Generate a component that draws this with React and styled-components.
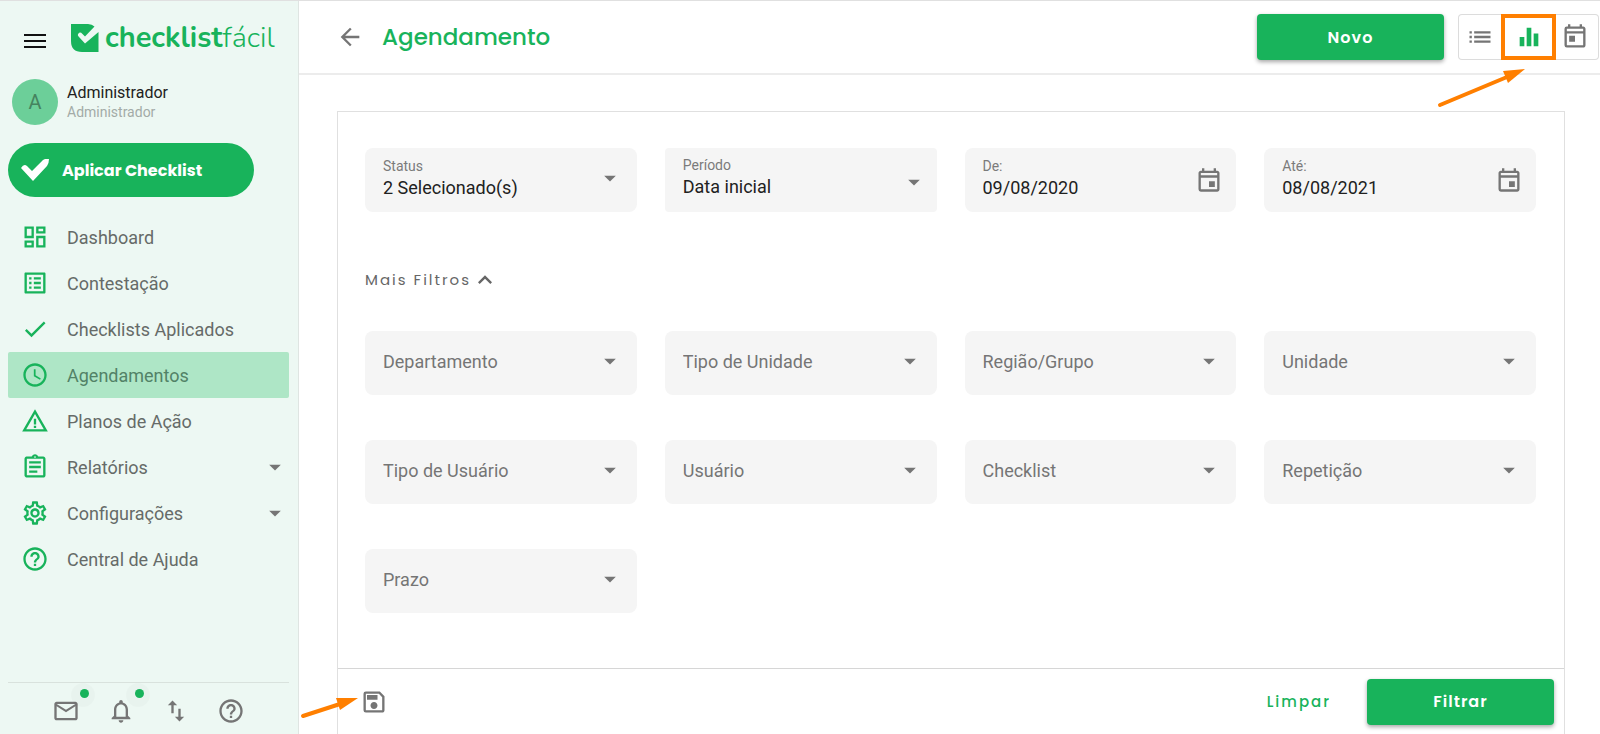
import React from 'react';
import styled, { createGlobalStyle } from 'styled-components';
import {
    MdOutlineDashboard, MdOutlineListAlt, MdCheck, MdSchedule, MdWarningAmber,
    MdOutlineAssignment, MdOutlineSettings, MdHelpOutline, MdArrowDropDown,
    MdMailOutline, MdNotificationsNone, MdImportExport, MdArrowBack, MdList,
    MdEqualizer, MdOutlineToday, MdOutlineEvent, MdKeyboardArrowUp, MdOutlineSave
} from 'react-icons/md';

const menu = [
    { label: 'Dashboard', Icon: MdOutlineDashboard },
    { label: 'Contestação', Icon: MdOutlineListAlt },
    { label: 'Checklists Aplicados', Icon: MdCheck },
    { label: 'Agendamentos', Icon: MdSchedule, active: true },
    { label: 'Planos de Ação', Icon: MdWarningAmber },
    { label: 'Relatórios', Icon: MdOutlineAssignment, more: true },
    { label: 'Configurações', Icon: MdOutlineSettings, more: true },
    { label: 'Central de Ajuda', Icon: MdHelpOutline },
]

const moreFilters = [
    'Departamento', 'Tipo de Unidade', 'Região/Grupo', 'Unidade',
    'Tipo de Usuário', 'Usuário', 'Checklist', 'Repetição', 'Prazo',
]

const Logo = () => (
    <LogoLink href="#" aria-label="checklistfácil">
        <svg width="28" height="28" viewBox="0 0 28 28">
            <path d="M0 0H17Q21 0 23.500 2.500L14 12.500L11.500 10Q9 7.500 7.500 9.500Q6 11 8 13L14 19.500L27.500 8V28H11Q0 28 0 17Z" fill="#18b35b" />
        </svg>
        <LogoText>checklist<span>fácil</span></LogoText>
    </LogoLink>
)

const SelectField = ({ id, label, value, compact }) => (
    <Field $compact={compact}>
        <FieldText>
            {value && <FieldLabel htmlFor={id}>{label}</FieldLabel>}
            <Select id={id} aria-label={label} $filled={!!value}>
                <option>{value || label}</option>
            </Select>
        </FieldText>
        <MdArrowDropDown size={28} />
    </Field>
)

const DateField = ({ id, label, value }) => (
    <Field $date>
        <FieldText>
            <FieldLabel htmlFor={id}>{label}</FieldLabel>
            <DateInput id={id} type="text" defaultValue={value} />
        </FieldText>
        <MdOutlineEvent size={28} />
    </Field>
)

const Sidebar = () => (
    <Aside>
        <Brand>
            <IconButton aria-label="Menu" $dark>
                <svg width="28" height="28" viewBox="0 0 28 28">
                    <path d="M3 11H25M3 17H25M3 23H25" stroke="currentColor" strokeWidth="2" />
                </svg>
            </IconButton>
            <Logo />
        </Brand>
        <User>
            <Avatar>A</Avatar>
            <div>
                <UserName>Administrador</UserName>
                <UserRole>Administrador</UserRole>
            </div>
        </User>
        <ApplyButton>
            <svg width="28" height="22" viewBox="0 0 28 22">
                <path d="M0 9Q3 4 6 7L11 12L22 1Q25 -1 28 0Q28 4 26 7L12 22Z" fill="#fff" />
            </svg>
            Aplicar Checklist
        </ApplyButton>
        <Nav>
            {menu.map(({ label, Icon, active, more }) => (
                <NavItem href="#" key={label} $active={active}>
                    <Icon size={28} />
                    <span>{label}</span>
                    {more && <MdArrowDropDown size={28} />}
                </NavItem>
            ))}
        </Nav>
        <SideFooter>
            <IconButton aria-label="Mensagens"><MdMailOutline size={28} /><Badge /></IconButton>
            <IconButton aria-label="Notificações"><MdNotificationsNone size={28} /><Badge /></IconButton>
            <IconButton aria-label="Importar e exportar"><MdImportExport size={28} /></IconButton>
            <IconButton aria-label="Ajuda"><MdHelpOutline size={28} /></IconButton>
        </SideFooter>
    </Aside>
)

const Header = () => (
    <TopBar>
        <IconButton aria-label="Voltar"><MdArrowBack size={28} /></IconButton>
        <Title>Agendamento</Title>
        <PrimaryButton>Novo</PrimaryButton>
        <ViewToggle>
            <ToggleButton aria-label="Lista"><MdList size={28} /></ToggleButton>
            <ToggleButton aria-label="Gráfico" $selected><MdEqualizer size={28} /></ToggleButton>
            <ToggleButton aria-label="Calendário"><MdOutlineToday size={28} /></ToggleButton>
            <TopArrow width="88" height="40" viewBox="0 0 88 40">
                <path d="M3 37L70 9" stroke="#ff7f00" strokeWidth="4" strokeLinecap="round" />
                <path d="M66 3L88 1L71 15Z" fill="#ff7f00" />
            </TopArrow>
        </ViewToggle>
    </TopBar>
)

const App = () => {
    return (
        <Page>
            <GlobalStyle />
            <Sidebar />
            <Main>
                <Header />
                <Card>
                    <Filters>
                        <FieldGrid>
                            <SelectField id="status" label="Status" value="2 Selecionado(s)" />
                            <SelectField id="periodo" label="Período" value="Data inicial" compact />
                            <DateField id="de" label="De:" value="09/08/2020" />
                            <DateField id="ate" label="Até:" value="08/08/2021" />
                        </FieldGrid>
                        <MoreButton>Mais Filtros <MdKeyboardArrowUp size={28} /></MoreButton>
                        <FieldGrid>
                            {moreFilters.map((label) => (
                                <SelectField key={label} id={label} label={label} />
                            ))}
                        </FieldGrid>
                    </Filters>
                    <CardFooter>
                        <SaveWrap>
                            <IconButton aria-label="Salvar filtro"><MdOutlineSave size={28} /></IconButton>
                            <SaveArrow width="58" height="24" viewBox="0 0 58 24">
                                <path d="M3 20L40 8" stroke="#ff7f00" strokeWidth="4" strokeLinecap="round" />
                                <path d="M36 2L58 2L40 14Z" fill="#ff7f00" />
                            </SaveArrow>
                        </SaveWrap>
                        <TextButton>Limpar</TextButton>
                        <PrimaryButton>Filtrar</PrimaryButton>
                    </CardFooter>
                </Card>
            </Main>
        </Page>
    )
}

export default App

const GlobalStyle = createGlobalStyle`
    * {
        box-sizing: border-box;
    }

    body {
        margin: 0;
        background: #fff;
        font-family: Roboto, sans-serif;
        color: #212121;
    }

    button {
        border: none;
        padding: 0;
        background: none;
        cursor: pointer;
    }

    svg {
        display: block;
        flex-shrink: 0;
    }
`

const Page = styled.div`
    display: flex;
    min-height: 100vh;
    border-top: 1px solid #e0e0e0;
`

const Aside = styled.aside`
    width: 299px;
    flex-shrink: 0;
    display: flex;
    flex-direction: column;
    padding: 0 9px 0 8px;
    background: #edf8f3;
    border-right: 1px solid #dfe5e2;
`

const Brand = styled.div`
    display: flex;
    align-items: center;
    gap: 22px;
    height: 73px;
    padding-left: 13px;
`

const IconButton = styled.button`
    position: relative;
    color: ${({ $dark }) => ($dark ? '#111' : '#757575')};
`

const LogoLink = styled.a`
    display: flex;
    align-items: center;
    gap: 6px;
    text-decoration: none;
`

const LogoText = styled.span`
    font-family: Nunito, 'Open Sans', sans-serif;
    font-size: 29px;
    line-height: 32px;
    font-weight: 700;
    color: #18b35b;

    span {
        font-weight: 300;
    }
`

const User = styled.div`
    display: flex;
    align-items: center;
    gap: 9px;
    height: 56px;
    padding-left: 4px;
`

const Avatar = styled.div`
    display: flex;
    align-items: center;
    justify-content: center;
    width: 46px;
    height: 46px;
    border-radius: 50%;
    background: #6ccf99;
    color: #45835f;
    font-size: 20px;
`

const UserName = styled.div`
    font-size: 16px;
    line-height: 20px;
`

const UserRole = styled.div`
    font-size: 14px;
    line-height: 18px;
    color: #a3aba7;
`

const ApplyButton = styled.button`
    display: flex;
    align-items: center;
    gap: 13px;
    width: 246px;
    height: 54px;
    margin-top: 13px;
    && {
        padding-left: 13px;
        background: #18b35b;
    }
    border-radius: 27px;
    color: #fff;
    font-family: Poppins, Inter, sans-serif;
    font-size: 16px;
    font-weight: 700;
`

const Nav = styled.nav`
    display: flex;
    flex-direction: column;
    margin-top: 17px;
`

const NavItem = styled.a`
    display: flex;
    align-items: center;
    gap: 18px;
    height: 46px;
    padding-left: 13px;
    border-radius: 2px;
    background: ${({ $active }) => ($active ? '#aee6c6' : 'transparent')};
    color: #18b35b;
    font-size: 18px;
    text-decoration: none;

    span {
        flex: 1;
        color: ${({ $active }) => ($active ? '#528267' : '#666b68')};
    }

    span + svg {
        color: #757575;
    }
`

const SideFooter = styled.div`
    display: flex;
    align-items: center;
    gap: 27px;
    height: 52px;
    margin-top: auto;
    padding: 4px 0 0 44px;
    border-top: 1px solid #d9e2dd;
`

const Badge = styled.span`
    position: absolute;
    top: -14px;
    right: -15px;
    width: 24px;
    height: 24px;
    border-radius: 50%;
    background: rgba(0, 0, 0, 0.02);

    &::after {
        content: '';
        position: absolute;
        top: 6px;
        left: 9px;
        width: 9px;
        height: 9px;
        border-radius: 50%;
        background: #18b35b;
    }
`

const Main = styled.main`
    flex: 1;
    min-width: 0;
    display: flex;
    flex-direction: column;
`

const TopBar = styled.header`
    display: flex;
    align-items: center;
    height: 74px;
    padding: 0 1px 0 37px;
    border-bottom: 2px solid #ececec;
`

const Title = styled.h1`
    flex: 1;
    margin: 0 0 0 18px;
    color: #18b35b;
    font-family: Poppins, Inter, sans-serif;
    font-size: 23px;
    font-weight: 500;
`

const PrimaryButton = styled.button`
    width: 187px;
    height: 46px;
    && {
        background: #18b35b;
    }
    border-radius: 4px;
    box-shadow: 0 2px 4px rgba(0, 0, 0, 0.35);
    color: #fff;
    font-family: Poppins, Inter, sans-serif;
    font-size: 16px;
    font-weight: 600;
    letter-spacing: 1px;
`

const ViewToggle = styled.div`
    position: relative;
    display: flex;
    height: 46px;
    margin-left: 14px;
    box-shadow: inset 0 0 0 1px #dcdcdc;
    border-radius: 4px;
`

const ToggleButton = styled.button`
    display: flex;
    align-items: center;
    justify-content: center;
    width: ${({ $selected }) => ($selected ? '55px' : '43px')};
    && {
        border: ${({ $selected }) => ($selected ? '4px solid #ff7f00' : 'none')};
    }
    color: ${({ $selected }) => ($selected ? '#18b35b' : '#757575')};

    ${({ $selected }) => $selected && '& + button { padding-right: 5px; }'}
`

const TopArrow = styled.svg`
    position: absolute;
    top: 54px;
    right: 74px;
    fill: none;
`

const Card = styled.section`
    flex: 1;
    display: flex;
    flex-direction: column;
    margin: 36px 35px 0 38px;
    border: 1px solid #e0e0e0;
    border-bottom: none;
`

const Filters = styled.div`
    flex: 1;
    padding: 36px 28px 52px 27px;
`

const FieldGrid = styled.div`
    display: grid;
    grid-template-columns: repeat(4, 1fr);
    gap: 45px 28px;
`

const FieldText = styled.div`
    flex: 1;
    min-width: 0;
    display: flex;
    flex-direction: column;
`

const Field = styled.div`
    display: flex;
    align-items: center;
    height: 64px;
    padding: ${({ $date, $compact }) => ($date ? '0 13px 0 18px' : $compact ? '0 9px 0 18px' : '0 13px 4px 18px')};
    border-radius: ${({ $compact }) => ($compact ? '4px' : '8px')};
    background: #f5f5f5;
    color: #757575;

    ${FieldText} {
        padding-bottom: ${({ $date, $compact }) => ($date ? '4px' : $compact ? '6px' : '0')};
    }

    ${({ $compact }) => $compact && '> svg { margin-top: 4px; }'}
`

const FieldLabel = styled.label`
    font-size: 14px;
    line-height: 18px;
    color: #7b7b7b;
`

const Select = styled.select`
    width: 100%;
    height: 24px;
    padding: 0;
    border: none;
    background: transparent;
    appearance: none;
    outline: none;
    font-family: inherit;
    font-size: 18px;
    color: ${({ $filled }) => ($filled ? '#212121' : '#757575')};
`

const DateInput = styled.input`
    width: 100%;
    height: 24px;
    padding: 0;
    border: none;
    background: transparent;
    outline: none;
    font-family: inherit;
    font-size: 18px;
    color: #212121;
`

const MoreButton = styled.button`
    display: flex;
    align-items: center;
    margin: 54px 0 37px;
    color: #666;
    font-family: Poppins, Inter, sans-serif;
    font-size: 15px;
    line-height: 28px;
    letter-spacing: 2px;
`

const CardFooter = styled.div`
    display: flex;
    align-items: center;
    height: 66px;
    padding: 0 10px 0 22px;
    border-top: 1px solid #d6d6d6;
`

const SaveWrap = styled.div`
    position: relative;
    margin-right: auto;
    padding-top: 4px;
`

const SaveArrow = styled.svg`
    position: absolute;
    top: 12px;
    right: 30px;
    fill: none;
`

const TextButton = styled.button`
    margin-right: 36px;
    color: #18b35b;
    font-family: Poppins, Inter, sans-serif;
    font-size: 15px;
    font-weight: 500;
    letter-spacing: 2px;
`
